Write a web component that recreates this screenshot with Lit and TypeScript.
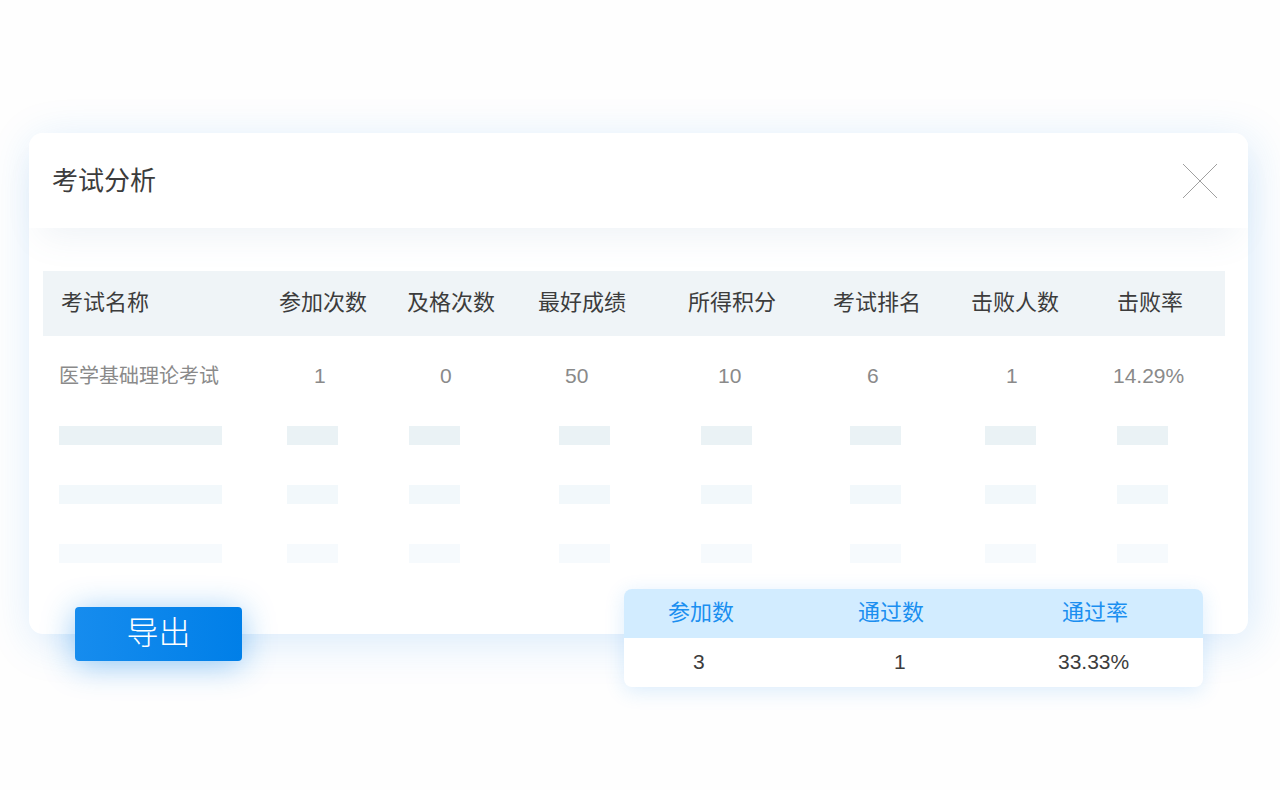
import {LitElement, html, css} from 'lit';
import {customElement, property} from 'lit/decorators.js';

const COLUMNS = ['考试名称', '参加次数', '及格次数', '最好成绩', '所得积分', '考试排名', '击败人数', '击败率'];

const EXAMS = [
    ['医学基础理论考试', '1', '0', '50', '10', '6', '1', '14.29%'],
];

const PLACEHOLDERS = ['first', 'second', 'third'];

@customElement('exam-table')
export class ExamTable extends LitElement {
    static styles = css`
        :host {
            display: block;
        }

        table,
        thead,
        tbody {
            display: block;
        }

        tr {
            display: grid;
            align-items: center;
            box-sizing: border-box;
        }

        th,
        td {
            padding: 0;
            font-weight: 400;
            text-align: left;
            white-space: nowrap;
        }

        .head {
            grid-template-columns: 218fr 128fr 131fr 150fr 145fr 138fr 146fr 108fr;
            height: 65px;
            padding-bottom: 2px;
            padding-left: 18px;
            font-size: 22px;
            line-height: 32px;
            color: #3c3c3c;
            background: #eff4f7;
        }

        .exam {
            grid-template-columns: 255fr 126fr 125fr 153fr 149fr 139fr 107fr 112fr;
            height: 70px;
            padding-top: 10px;
            padding-left: 16px;
            font-size: 21px;
            line-height: 32px;
            color: #8a8a8a;
        }

        .exam .name {
            font-size: 20px;
        }

        .placeholder {
            grid-template-columns: 228fr 122fr 150fr 142fr 149fr 135fr 132fr 108fr;
            height: 59px;
            padding-left: 16px;
        }

        .bar {
            display: block;
            width: 51px;
            height: 19px;
            background: currentcolor;
        }

        .name .bar {
            width: 163px;
        }

        .first {
            color: #eaf2f5;
        }

        .second {
            color: #f2f8fb;
        }

        .third {
            color: #f6fafd;
        }
    `;

    render() {
        return html`
            <table>
                <thead>
                    <tr class="head">
                        ${COLUMNS.map(name => html`<th scope="col">${name}</th>`)}
                    </tr>
                </thead>
                <tbody>
                    ${EXAMS.map(exam => html`
                        <tr class="exam">
                            ${exam.map((value, i) => html`<td class="${i ? 'value' : 'name'}">${value}</td>`)}
                        </tr>
                    `)}
                    ${PLACEHOLDERS.map(tone => html`
                        <tr class="placeholder ${tone}" aria-hidden="true">
                            ${COLUMNS.map((_, i) => html`<td class="${i ? 'value' : 'name'}"><span class="bar"></span></td>`)}
                        </tr>
                    `)}
                </tbody>
            </table>
        `;
    }
}

@customElement('exam-summary')
export class ExamSummary extends LitElement {
    static styles = css`
        :host {
            display: block;
            overflow: hidden;
            line-height: 32px;
            background: #fff;
            border-radius: 8px;
            box-shadow: 0 4px 20px rgb(30 144 245 / 16%);
        }

        table,
        thead,
        tbody {
            display: block;
        }

        tr {
            display: grid;
            align-items: center;
            box-sizing: border-box;
            height: 49px;
            padding-bottom: 2px;
        }

        th,
        td {
            padding: 0;
            font-weight: 400;
            text-align: left;
            white-space: nowrap;
        }

        .head {
            grid-template-columns: 190fr 204fr 141fr;
            padding-left: 44px;
            font-size: 22px;
            color: #1b8ff0;
            background: #d2ecff;
        }

        .total {
            grid-template-columns: 201fr 164fr 145fr;
            padding-left: 69px;
            font-size: 21px;
            color: #3c3c3c;
        }
    `;

    @property({type: Array}) labels: string[] = [];
    @property({type: Array}) totals: string[] = [];

    render() {
        return html`
            <table>
                <thead>
                    <tr class="head">${this.labels.map(label => html`<th scope="col">${label}</th>`)}</tr>
                </thead>
                <tbody>
                    <tr class="total">${this.totals.map(total => html`<td>${total}</td>`)}</tr>
                </tbody>
            </table>
        `;
    }
}

@customElement('app-root')
export class AppRoot extends LitElement {
    static styles = css`
        :host {
            display: block;
            box-sizing: border-box;
            min-height: 100vh;
            padding: 133px 32px 64px 29px;
            font-family: "Liberation Sans", "Noto Sans CJK SC", sans-serif;
            background: #fefefe;
        }

        .card {
            display: flex;
            flex-direction: column;
            background: #fff;
            border-radius: 14px;
            box-shadow: 4px 8px 44px rgb(30 136 235 / 17%);
        }

        header {
            display: flex;
            align-items: center;
            justify-content: space-between;
            height: 95px;
            padding: 0 31px 0 23px;
            background: #fff;
            border-radius: 14px 14px 0 0;
            box-shadow: 0 20px 36px -12px rgb(90 130 170 / 10%);
        }

        h1 {
            margin: 0;
            font-size: 26px;
            font-weight: 400;
            line-height: 38px;
            color: #3c3c3c;
        }

        button {
            padding: 0;
            font-family: inherit;
            cursor: pointer;
            border: 0;
        }

        .close {
            width: 34px;
            height: 34px;
            color: #a0a0a0;
            background: none;
        }

        .close svg {
            display: block;
        }

        .content {
            padding: 43px 23px 0 14px;
        }

        /* the actions hang over the lower edge of the card */
        footer {
            display: flex;
            align-items: flex-start;
            justify-content: space-between;
            padding: 6px 45px 0 46px;
            margin-bottom: -53px;
        }

        .export {
            width: 167px;
            height: 54px;
            padding-bottom: 2px;
            margin-top: 18px;
            font-size: 32px;
            font-weight: 300;
            line-height: 48px;
            color: #fff;
            background: linear-gradient(90deg, #168cee, #007fe8);
            border-radius: 4px;
            box-shadow: 0 4px 32px rgb(20 136 236 / 45%);
        }

        exam-summary {
            flex: 0 1 579px;
        }
    `;

    render() {
        return html`
            <section class="card">
                <header>
                    <h1>考试分析</h1>
                    <button class="close" type="button" aria-label="关闭">
                        <svg width="34" height="34" viewBox="0 0 34 34" fill="none" stroke="currentColor">
                            <path d="M0 0L34 34M34 0L0 34"/>
                        </svg>
                    </button>
                </header>
                <div class="content">
                    <exam-table></exam-table>
                </div>
                <footer>
                    <button class="export" type="button">导出</button>
                    <exam-summary
                        .labels=${['参加数', '通过数', '通过率']}
                        .totals=${['3', '1', '33.33%']}
                    ></exam-summary>
                </footer>
            </section>
        `;
    }
}
